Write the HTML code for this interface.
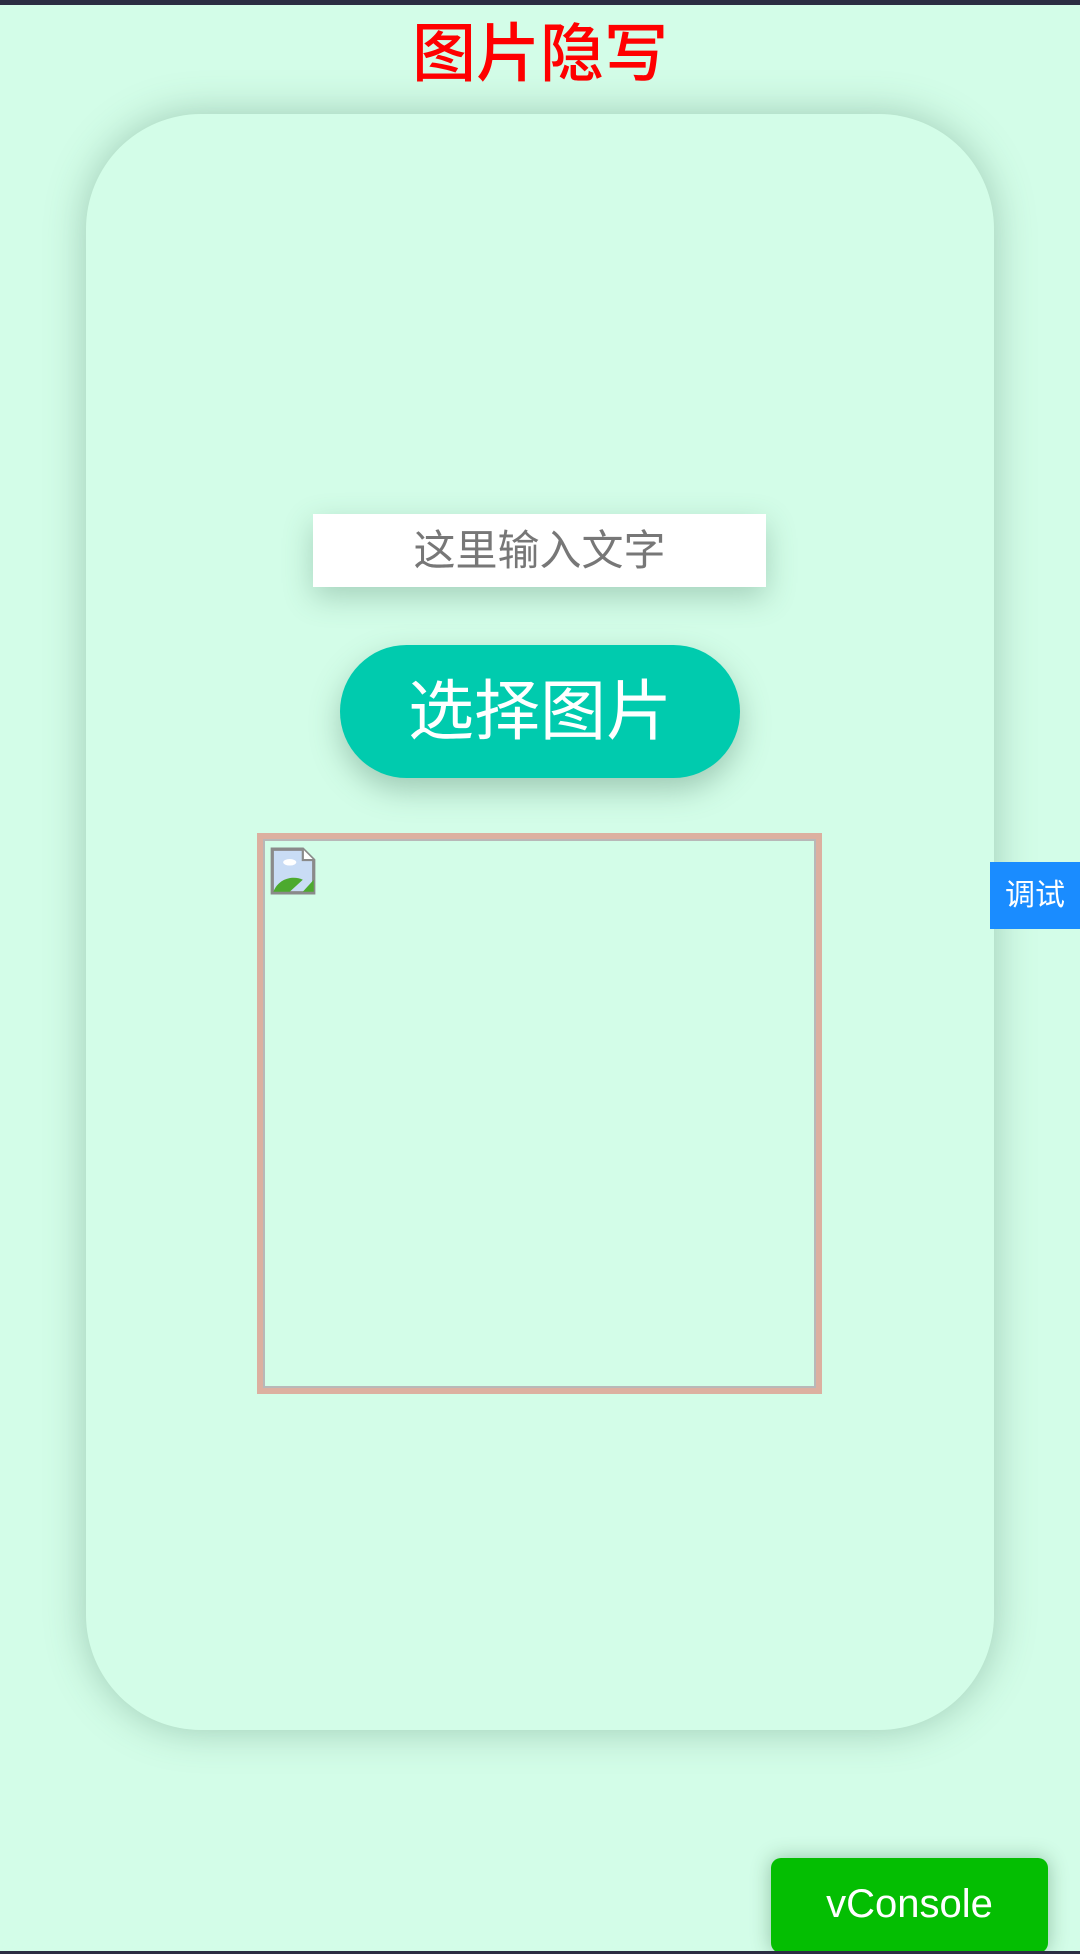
<!DOCTYPE html>
<html><head><meta charset="utf-8"><style>
html,body{margin:0;padding:0;}
body{width:1080px;height:1954px;background:#d3fde8;position:relative;overflow:hidden;font-family:"Liberation Sans","Noto Sans CJK SC",sans-serif;}
.topbar{position:absolute;left:0;top:0;width:1080px;height:5px;background:#2b2d42;}
.botbar{position:absolute;left:0;top:1951px;width:1080px;height:3px;background:#2b2d42;}
.title{position:absolute;left:0;width:1080px;top:12px;text-align:center;color:#ff0000;font-size:64px;font-weight:500;line-height:84px;}
.card{position:absolute;left:86px;top:114px;width:908px;height:1616px;border-radius:115px;background:#d3fde8;box-shadow:0 0 40px rgba(60,110,85,0.35);}
.input{position:absolute;left:313px;top:514px;width:453px;height:73px;background:#fff;box-shadow:0 10px 30px rgba(60,110,85,0.3);color:#777;font-size:42px;line-height:73px;text-align:center;}
.btn{position:absolute;left:340px;top:645px;width:400px;height:133px;border-radius:67px;background:#00cbae;box-shadow:0 12px 30px rgba(60,110,85,0.35);color:#fff;font-size:66px;line-height:133px;text-align:center;}
.imgbox{position:absolute;left:257px;top:833px;width:565px;height:561px;box-sizing:border-box;border:6px solid #dcb0a0;}
.imgbox .in{position:absolute;left:0;top:0;right:0;bottom:0;border:2px solid #b8b8b8;}
.icon{position:absolute;left:6px;top:8px;}
.tab{position:absolute;left:990px;top:862px;width:90px;height:67px;background:#1a8cff;color:#fff;font-size:30px;line-height:67px;text-align:center;}
.vc{position:absolute;left:771px;top:1858px;width:277px;height:95px;border-radius:10px;background:#04be02;color:#fff;font-size:40px;line-height:92px;text-align:center;box-shadow:0 0 20px rgba(0,60,20,0.3);}
</style></head><body>
<div class="topbar"></div>
<div class="title">图片隐写</div>
<div class="card"></div>
<div class="input">这里输入文字</div>
<div class="btn">选择图片</div>
<div class="imgbox"><div class="in"></div>
<svg class="icon" width="48" height="48" viewBox="0 0 42 44">
<path d="M2 2 H30 L40 12 V42 H2 Z" fill="#c9dcf5" stroke="#8a8a8a" stroke-width="3"/>
<path d="M30 2 V12 H40" fill="#fff" stroke="#8a8a8a" stroke-width="2"/>
<ellipse cx="18" cy="14" rx="6" ry="3" fill="#fff"/>
<path d="M3 41 C8 28 22 26 30 30 L18 41 Z" fill="#4caa2e"/>
<path d="M40 30 L30 41 H40 Z" fill="#4caa2e"/>
</svg></div>
<div class="tab">调试</div>
<div class="vc">vConsole</div>
<div class="botbar"></div>
</body></html>
